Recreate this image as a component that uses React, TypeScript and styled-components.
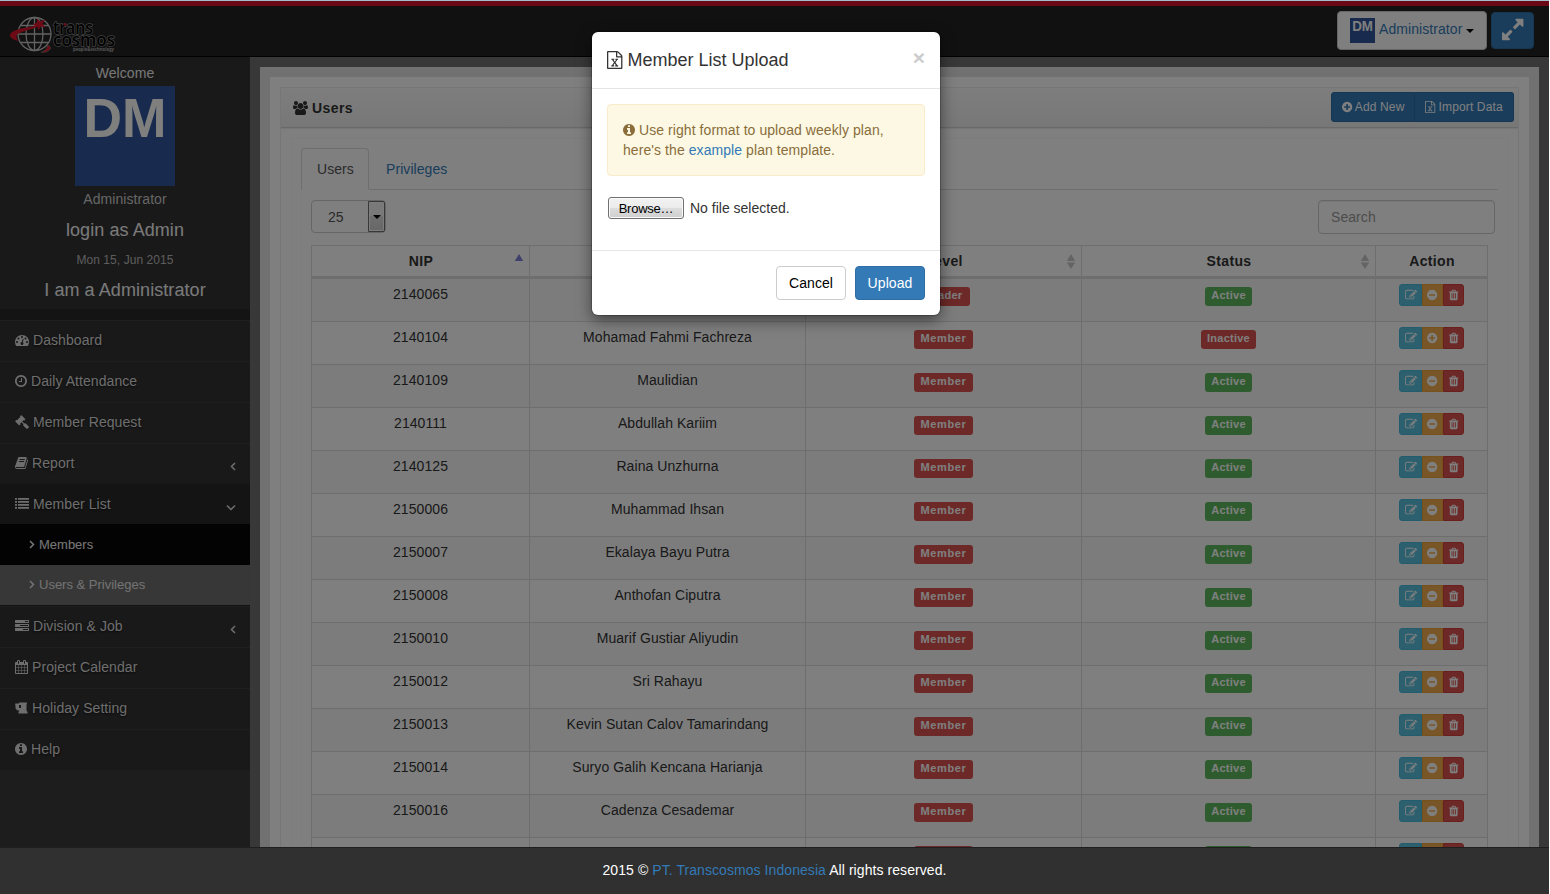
import React from "react";
import styled, { createGlobalStyle, css } from "styled-components";

const GlobalStyle = createGlobalStyle`
  *, *::before, *::after { box-sizing: border-box; }
  body {
    margin: 0;
    background: #fff;
    font-family: "Liberation Sans", Arial, sans-serif;
    font-size: 14px;
    line-height: 20px;
    letter-spacing: 0.07px;
    color: #333;
  }
  a { color: #337ab7; text-decoration: none; }
`;

/* ---------- icons ---------- */

const DISC =
  "M1664 896q0 209-103 385.5t-279.5 279.5-385.5 103-385.5-103-279.5-279.5-103-385.5 103-385.5 279.5-279.5 385.5-103 385.5 103 279.5 279.5 103 385.5z";

type Glyph = { x: number; w: number; d: string };

const glyphs = {
  info: {
    x: 128, w: 1536,
    d: "M1152 1376v-160q0-14-9-23t-23-9h-96v-512q0-14-9-23t-23-9h-320q-14 0-23 9t-9 23v160q0 14 9 23t23 9h96v320h-96q-14 0-23 9t-9 23v160q0 14 9 23t23 9h448q14 0 23-9t9-23zm-128-896v-160q0-14-9-23t-23-9h-192q-14 0-23 9t-9 23v160q0 14 9 23t23 9h192q14 0 23-9t9-23z" + DISC,
  },
  clock: {
    x: 128, w: 1536,
    d: "M1024 544v448q0 14-9 23t-23 9h-320q-14 0-23-9t-9-23v-64q0-14 9-23t23-9h224v-352q0-14 9-23t23-9h64q14 0 23 9t9 23zm416 352q0-148-73-273t-198-198-273-73-273 73-198 198-73 273 73 273 198 198 273 73 273-73 198-198 73-273z" + DISC,
  },
  plus: {
    x: 128, w: 1536,
    d: "M1344 960v-128q0-26-19-45t-45-19h-256v-256q0-26-19-45t-45-19h-128q-26 0-45 19t-19 45v256h-256q-26 0-45 19t-19 45v128q0 26 19 45t45 19h256v256q0 26 19 45t45 19h128q26 0 45-19t19-45v-256h256q26 0 45-19t19-45z" + DISC,
  },
  minus: {
    x: 128, w: 1536,
    d: "M1344 960v-128q0-26-19-45t-45-19h-768q-26 0-45 19t-19 45v128q0 26 19 45t45 19h768q26 0 45-19t19-45z" + DISC,
  },
  trash: {
    x: 192, w: 1408,
    d: "M704 1376v-704q0-14-9-23t-23-9h-64q-14 0-23 9t-9 23v704q0 14 9 23t23 9h64q14 0 23-9t9-23zm256 0v-704q0-14-9-23t-23-9h-64q-14 0-23 9t-9 23v704q0 14 9 23t23 9h64q14 0 23-9t9-23zm256 0v-704q0-14-9-23t-23-9h-64q-14 0-23 9t-9 23v704q0 14 9 23t23 9h64q14 0 23-9t9-23zm-544-992h448l-48-117q-7-9-17-11h-317q-10 2-17 11zm928 32v64q0 14-9 23t-23 9h-96v948q0 83-47 143.5t-113 60.5h-832q-66 0-113-58.5t-47-141.5v-952h-96q-14 0-23-9t-9-23v-64q0-14 9-23t23-9h309l70-167q15-37 54-63t79-26h320q40 0 79 26t54 63l70 167h309q14 0 23 9t9 23z",
  },
  edit: {
    x: 0, w: 1792,
    d: "M888 1184l116-116-152-152-116 116v56h96v96h56zm440-720q-16-16-33 1l-350 350q-17 17-1 33t33-1l350-350q17-17 1-33zm80 594v190q0 119-84.5 203.5t-203.5 84.5h-832q-119 0-203.5-84.5t-84.5-203.5v-832q0-119 84.5-203.5t203.5-84.5h832q63 0 117 25 15 7 18 23 3 17-9 29l-49 49q-14 14-32 8-23-6-45-6h-832q-66 0-113 47t-47 113v832q0 66 47 113t113 47h832q66 0 113-47t47-113v-126q0-13 9-22l64-64q15-15 35-7t20 29zm-96-738l288 288-672 672h-288v-288zm444 132l-92 92-288-288 92-92q28-28 68-28t68 28l152 152q28 28 28 68t-28 68z",
  },
  book: {
    x: 64, w: 1664,
    d: "M1703 478q40 57 18 129l-275 906q-19 64-76.5 107.5t-122.5 43.5h-923q-77 0-148.5-53.5t-99.5-131.5q-24-67-2-127 0-4 3-27t4-37q1-8-3-21.5t-3-19.5q2-11 8-21t16.5-23.5 16.5-23.5q23-38 45-91.5t30-91.5q3-10 .5-30t-.5-28q3-11 17-28t17-23q21-36 42-92t25-90q1-9-2.5-32t.5-28q4-13 22-30.5t22-22.5q19-26 42.5-84.5t27.5-96.5q1-8-3-25.5t-2-26.5q2-8 9-18t18-23 17-21q8-12 16.5-30.5t15-35 16-36 19.5-32 26.5-23.5 36-11.5 47.5 5.5l-1 3q38-9 51-9h761q74 0 114 56t18 130l-274 906q-36 119-71.5 153.5t-128.5 34.5h-869q-27 0-38 15-11 16-1 43 24 70 144 70h923q29 0 56-15.5t35-41.5l300-987q7-22 5-57 38 15 59 43zm-1064 2q-4 13 2 22.5t20 9.5h608q13 0 25.5-9.5t16.5-22.5l21-64q4-13-2-22.5t-20-9.5h-608q-13 0-25.5 9.5t-16.5 22.5zm-83 256q-4 13 2 22.5t20 9.5h608q13 0 25.5-9.5t16.5-22.5l21-64q4-13-2-22.5t-20-9.5h-608q-13 0-25.5 9.5t-16.5 22.5z",
  },
  list: {
    x: 0, w: 1792,
    d: "M0 1280h256v224H0zM0 896h256v224H0zM0 512h256v224H0zM384 1280h1408v224H384zM0 128h256v224H0zM384 896h1408v224H384zM384 512h1408v224H384zM384 128h1408v224H384z",
  },
  tasks: {
    x: 0, w: 1792,
    d: "M1024 1408h640v-128h-640v128zm-384-512h1024v-128h-1024v128zm640-512h384v-128h-384v128zm512 832v256q0 26-19 45t-45 19h-1664q-26 0-45-19t-19-45v-256q0-26 19-45t45-19h1664q26 0 45 19t19 45zm0-512v256q0 26-19 45t-45 19h-1664q-26 0-45-19t-19-45v-256q0-26 19-45t45-19h1664q26 0 45 19t19 45zm0-512v256q0 26-19 45t-45 19h-1664q-26 0-45-19t-19-45v-256q0-26 19-45t45-19h1664q26 0 45 19t19 45z",
  },
  excel: {
    x: 128, w: 1536,
    d: "M1596 380q28 28 48 76t20 88v1152q0 40-28 68t-68 28h-1344q-40 0-68-28t-28-68v-1600q0-40 28-68t68-28h896q40 0 88 20t76 48zm-444-244v376h376q-10-29-22-41l-313-313q-12-12-41-22zm384 1528v-1024h-416q-40 0-68-28t-28-68v-416h-768v1536h1280zm-979-234v106h281v-106h-75l103-161q5-7 10-16.5t7.5-13.5 3.5-4h2q1 4 5 10 2 4 4.5 7.5t6 8 6.5 8.5l107 161h-76v106h291v-106h-68l-192-273 195-282h67v-107h-279v107h74l-103 159q-4 7-10 16.5t-9 13.5l-2 3h-2q-1-4-5-10-6-11-17-23l-106-159h76v-107h-290v107h68l189 272-194 283h-68z",
  },
  users: {
    x: -64, w: 1920,
    d: "M529 896q-162 5-265 128h-134q-82 0-138-40.5t-56-118.5q0-353 124-353 6 0 43.5 21t97.5 42.5 119 21.5q67 0 133-23-5 37-5 66 0 139 81 256zm1071 637q0 120-73 189.5t-194 69.5h-874q-121 0-194-69.5t-73-189.5q0-53 3.5-103.5t14-109 26.5-108.5 43-97.5 62-81 85.5-53.5 111.5-20q10 0 43 21.5t73 48 107 48 135 21.5 135-21.5 107-48 73-48 43-21.5q61 0 111.5 20t85.5 53.5 62 81 43 97.5 26.5 108.5 14 109 3.5 103.5zm-1024-1277q0 106-75 181t-181 75-181-75-75-181 75-181 181-75 181 75 75 181zm704 384q0 159-112.5 271.5t-271.5 112.5-271.5-112.5-112.5-271.5 112.5-271.5 271.5-112.5 271.5 112.5 112.5 271.5zm576 225q0 78-56 118.5t-138 40.5h-134q-103-123-265-128 81-117 81-256 0-29-5-66 66 23 133 23 59 0 119-21.5t97.5-42.5 43.5-21q124 0 124 353zm-128-609q0 106-75 181t-181 75-181-75-75-181 75-181 181-75 181 75 75 181z",
  },
  gavel: {
    x: 0, w: 1792,
    d: "M1771 1536q0 53-37 90l-107 108q-39 37-91 37-53 0-90-37l-363-364q-38-36-38-90 0-53 43-96l-256-256-126 126q-14 14-34 14t-34-14q2 2 12.5 12t12.5 13 10 11.5 10 13.5 6 13.5 5.5 16.5 1.5 18q0 38-28 68-3 3-16.5 18t-19 20.5-18.5 16.5-22 15.5-22 9-26 4.5q-40 0-68-28l-408-408q-28-28-28-68 0-13 4.5-26t9-22 15.5-22 16.5-18.5 20.5-19 18-16.5q30-28 68-28 10 0 18 1.5t16.5 5.5 13.5 6 13.5 10 11.5 10 13 12.5 12 12.5q-14-14-14-34t14-34l348-348q14-14 34-14t34 14q-2-2-12.5-12t-12.5-13-10-11.5-10-13.5-6-13.5-5.5-16.5-1.5-18q0-38 28-68 3-3 16.5-18t19-20.5 18.5-16.5 22-15.5 22-9 26-4.5q40 0 68 28l408 408q28 28 28 68 0 13-4.5 26t-9 22-15.5 22-16.5 18.5-20.5 19-18 16.5q-30 28-68 28-10 0-18-1.5t-16.5-5.5-13.5-6-13.5-10-11.5-10-13-12.5-12-12.5q14 14 14 34t-14 34l-126 126 256 256q43-43 96-43 52 0 91 37l363 363q37 39 37 91z",
  },
  gauge: {
    x: 0, w: 1792,
    d: "M384 1152q0-53-37.5-90.5t-90.5-37.5-90.5 37.5-37.5 90.5 37.5 90.5 90.5 37.5 90.5-37.5 37.5-90.5zm192-448q0-53-37.5-90.5t-90.5-37.5-90.5 37.5-37.5 90.5 37.5 90.5 90.5 37.5 90.5-37.5 37.5-90.5zm428 481l101-382q6-26-7.5-48.5t-38.5-29.5-48 6.5-30 39.5l-101 382q-60 5-107 43.5t-63 98.5q-20 77 20 146t117 89 146-20 89-117q16-60-6-117t-72-91zm660-33q0-53-37.5-90.5t-90.5-37.5-90.5 37.5-37.5 90.5 37.5 90.5 90.5 37.5 90.5-37.5 37.5-90.5zm-640-640q0-53-37.5-90.5t-90.5-37.5-90.5 37.5-37.5 90.5 37.5 90.5 90.5 37.5 90.5-37.5 37.5-90.5zm448 192q0-53-37.5-90.5t-90.5-37.5-90.5 37.5-37.5 90.5 37.5 90.5 90.5 37.5 90.5-37.5 37.5-90.5zm320 448q0 261-141 483-19 29-54 29h-1402q-35 0-54-29-141-221-141-483 0-182 71-348t191-286 286-191 348-71 348 71 286 191 191 286 71 348z",
  },
  calendar: {
    x: 64, w: 1664,
    d: "M192 1664h288v-288h-288v288zm352 0h320v-288h-320v288zm-352-352h288v-320h-288v320zm352 0h320v-320h-320v320zm-352-384h288v-288h-288v288zm736 736h320v-288h-320v288zm-384-736h320v-288h-320v288zm768 736h288v-288h-288v288zm-384-352h320v-320h-320v320zm-352-864v-288q0-13-9.5-22.5t-22.5-9.5h-64q-13 0-22.5 9.5t-9.5 22.5v288q0 13 9.5 22.5t22.5 9.5h64q13 0 22.5-9.5t9.5-22.5zm736 864h288v-320h-288v320zm-384-384h320v-288h-320v288zm384 0h288v-288h-288v288zm32-480v-288q0-13-9.5-22.5t-22.5-9.5h-64q-13 0-22.5 9.5t-9.5 22.5v288q0 13 9.5 22.5t22.5 9.5h64q13 0 22.5-9.5t9.5-22.5zm384-64v1280q0 52-38 90t-90 38h-1408q-52 0-90-38t-38-90v-1280q0-52 38-90t90-38h128v-96q0-66 47-113t113-47h64q66 0 113 47t47 113v96h384v-96q0-66 47-113t113-47h64q66 0 113 47t47 113v96h128q52 0 90 38t38 90z",
  },
  beer: {
    x: 64, w: 1664,
    d: "M832 896v-384h-256v256q0 53 37.5 90.5t90.5 37.5h128zm832 512v192h-1152v-192l128-192h-128q-159 0-271.5-112.5t-112.5-271.5v-320l-64-64 32-128h480l32-128h960l32 192-64 32v800z",
  },
  expand: {
    x: 128, w: 1536,
    d: "M883 1056q0 13-10 23l-332 332 144 144q19 19 19 45t-19 45-45 19h-448q-26 0-45-19t-19-45v-448q0-26 19-45t45-19 45 19l144 144 332-332q10-10 23-10t23 10l114 114q10 10 10 23zm781-864v448q0 26-19 45t-45 19-45-19l-144-144-332 332q-10 10-23 10t-23-10l-114-114q-10-10-10-23t10-23l332-332-144-144q-19-19-19-45t19-45 45-19h448q26 0 45 19t19 45z",
  },
} satisfies Record<string, Glyph>;

type GlyphName = keyof typeof glyphs;

const GlyphSvg = styled.svg`
  display: inline-block;
  flex: none;
  fill: currentColor;
  vertical-align: -0.143em;
  overflow: visible;
`;

function Icon({ name, size = 14 }: { name: GlyphName; size?: number }) {
  const g = glyphs[name];
  return (
    <GlyphSvg viewBox={`${g.x} 0 ${g.w} 1792`} width={(g.w / 1792) * size} height={size} aria-hidden>
      <path fillRule="evenodd" d={g.d} />
    </GlyphSvg>
  );
}

const chevrons = {
  left: "M5 1 L1.5 4.5 L5 8",
  right: "M1 1 L4.5 4.5 L1 8",
  down: "M1 2.5 L5 6.5 L9 2.5",
};

const ChevronSvg = styled.svg`
  flex: none;
  fill: none;
  stroke: currentColor;
  stroke-width: 1.5;
`;

function Chevron({ dir }: { dir: keyof typeof chevrons }) {
  return (
    <ChevronSvg width={dir === "down" ? 10 : 6} height={9} aria-hidden>
      <path d={chevrons[dir]} />
    </ChevronSvg>
  );
}

function Avatar({ size }: { size: number }) {
  return (
    <svg width={size} height={size} viewBox="0 0 100 100" aria-label="DM">
      <rect width="100" height="100" fill="#32549f" />
      <text
        x="8.500"
        y="51"
        fill="#fffffa"
        fontFamily="'Liberation Sans', Arial, sans-serif"
        fontWeight="700"
        fontSize="56"
        letterSpacing="0"
        textLength="83"
        lengthAdjust="spacingAndGlyphs"
      >
        DM
      </text>
    </svg>
  );
}

function Logo() {
  return (
    <svg width="112" height="42" viewBox="0 0 112 42" aria-label="trans cosmos">
      <g fill="none" stroke="#c4c4c4" strokeWidth="1.300">
        <circle cx="25.500" cy="20" r="16.500" />
        <ellipse cx="25.500" cy="20" rx="8.500" ry="16.500" />
        <path d="M25.500 3.500v33M9 20h33M12 11.500h27M12 28.500h27" />
      </g>
      <path d="M10 27C4 26 .5 23.500 1 21c.6-4 9-6.500 17-7.500 5-1 9-2 11-3.500l1 1.500c-3 2.500-9 4-14 5.500-5 1.500-8.500 3-8.500 5.500 0 1.500 1 3 2.500 4.500z" fill="#d9142b" />
      <path d="M28 4.500l3 3 5-2-2.500 4 3 4-4.500-1-3 4-.5-4.500-5-1.500 4.500-2z" fill="#d9142b" />
      <path d="M38 31c4 1 5 3.500 1 6-2 1.200-4.500 1.500-7 1.200 4-1.200 7-3.500 6-7.200z" fill="#d9142b" stroke="#999" strokeWidth=".5" />
      <g
        fontFamily="'Open Sans', 'Noto Sans', sans-serif"
        fill="#000"
        stroke="#868686"
        strokeWidth="1.400"
        paintOrder="stroke"
        fontSize="18"
        fontWeight="600"
        letterSpacing="0"
      >
        <text x="44" y="19.500" textLength="40" lengthAdjust="spacingAndGlyphs">trans</text>
        <text x="44" y="32" textLength="62" lengthAdjust="spacingAndGlyphs">cosmos</text>
      </g>
      <text
        x="64"
        y="36.500"
        fontSize="5.500"
        fontWeight="700"
        letterSpacing="0"
        textLength="41"
        lengthAdjust="spacingAndGlyphs"
        fontFamily="'Open Sans', sans-serif"
        fill="#aaa"
      >
        people&amp;technology
      </text>
      <circle cx="56" cy="10.500" r="1.300" fill="#d9142b" />
    </svg>
  );
}

/* ---------- page frame ---------- */

const Screen = styled.div`
  position: relative;
  display: flex;
  flex-direction: column;
  width: 1549px;
  height: 894px;
  overflow: hidden;
`;

const WindowEdge = styled.div`
  position: relative;
  z-index: 3;
  flex: none;
  height: 1px;
  background: #a4bccb;
`;

const Navbar = styled.header`
  flex: none;
  display: flex;
  align-items: flex-start;
  justify-content: space-between;
  height: 56px;
  padding: 5px 15px 0 9px;
  border-top: 5px solid #d5132b;
  border-bottom: 1px solid #020202;
  background: #222;
`;

const Brand = styled.div`
  display: flex;
  padding-top: 3px;
`;

const NavTools = styled.div`
  display: flex;
  align-items: center;
  gap: 4px;
`;

const AccountButton = styled.a`
  display: flex;
  align-items: center;
  width: 150px;
  height: 39px;
  padding: 0 0 0 12px;
  border: 1px solid #ccc;
  border-radius: 4px;
  background: #fff;
`;

const AccountName = styled.span`
  margin: -3px 4px 0 4px;
`;

const Caret = styled.span`
  width: 0;
  height: 0;
  border: 4px solid transparent;
  border-top-color: #000;
  border-bottom: 0;
`;

const ExpandButton = styled.a`
  display: flex;
  align-items: center;
  justify-content: center;
  width: 43px;
  height: 37px;
  padding-bottom: 2px;
  border: 1px solid #2e6da4;
  border-radius: 4px;
  background: #337ab7;
  color: #fff;
`;

const Body = styled.div`
  flex: 1;
  display: flex;
  min-height: 0;
  background: #707070;
`;

/* ---------- sidebar ---------- */

const Sidebar = styled.aside`
  flex: none;
  display: flex;
  flex-direction: column;
  width: 250px;
  background: #3b3b3b;
`;

const Profile = styled.div`
  display: flex;
  flex-direction: column;
  align-items: center;
  height: 252px;
  padding-top: 6px;
  background: #323232;
  color: #ccc;
`;

const Welcome = styled.div`
  margin-bottom: 3px;
  color: #eee;
`;

const ProfileName = styled.div`
  margin-top: 3px;
  color: #ccc;
`;

const ProfileHeading = styled.div`
  margin: 11px 0 9px;
  font-size: 18px;
  color: #f4f4f4;
`;

const ProfileDate = styled.div`
  margin: 1px 0 -1px;
  font-size: 12px;
  color: #bbb;
`;

const MenuGap = styled.div`
  height: 11px;
  background: #292929;
`;

const MenuItem = styled.a<{ $open?: boolean; $short?: boolean }>`
  display: flex;
  align-items: center;
  gap: 4px;
  height: ${(p) => (p.$short ? 40 : 41)}px;
  padding: 0 14px ${(p) => (p.$short ? 1 : 2)}px 15px;
  border-top: 1px solid ${(p) => (p.$open ? "#2b2b2b" : "#3f3f3f")};
  background: ${(p) => (p.$open ? "#292929" : "#323232")};
  color: #ddd;
  text-shadow: 0 1px 2px #111;
`;

const MenuLabel = styled.span`
  flex: 1;
`;

const MenuArrow = styled.span`
  display: flex;
  padding-top: 6px;
`;

const SubItem = styled.a<{ $active?: boolean }>`
  display: flex;
  align-items: center;
  gap: 4px;
  height: ${(p) => (p.$active ? 40 : 41)}px;
  padding-left: 29px;
  padding-bottom: ${(p) => (p.$active ? 1 : 0)}px;
  font-size: 13px;
  letter-spacing: 0;
  background: ${(p) => (p.$active ? "#6f6f6f" : "#060606")};
  color: ${(p) => (p.$active ? "#e4e4e4" : "#eee")};
`;

const MenuDivider = styled.div`
  height: 1px;
  background: #222;
`;

/* ---------- content ---------- */

const Content = styled.main`
  flex: 1;
  display: flex;
  min-width: 0;
  padding: 10px 10px 0;
`;

const Frame = styled.div`
  flex: 1;
  min-width: 0;
  padding: 10px 10px 0;
  background: #e3e3e3;
`;

const Page = styled.div`
  height: 100%;
  padding: 10px 10px 0;
  background: #fff;
`;

const Box = styled.section`
  height: 1000px;
  border: 1px solid #ededed;
`;

const BoxHeader = styled.div`
  display: flex;
  align-items: center;
  justify-content: space-between;
  height: 40px;
  padding: 0 4px 0 12px;
  border-bottom: 1px solid #d2d2d2;
  background: linear-gradient(#fbfbfb, #efefef);
  box-shadow: 0 1px 1px #eee;
`;

const BoxTitle = styled.div`
  display: flex;
  align-items: center;
  gap: 4px;
  font-weight: 700;
  letter-spacing: 0.4px;
`;

const ButtonGroup = styled.div`
  display: flex;
  margin-bottom: 2px;
`;

const GroupButton = styled.a<{ $wide?: boolean }>`
  display: flex;
  align-items: center;
  justify-content: center;
  gap: 3px;
  width: ${(p) => (p.$wide ? 99 : 84)}px;
  height: 30px;
  border: 1px solid #2e6da4;
  border-left-width: ${(p) => (p.$wide ? 0 : 1)}px;
  border-radius: ${(p) => (p.$wide ? "0 3px 3px 0" : "3px 0 0 3px")};
  background: #337ab7;
  color: #fff;
  font-size: 12px;
  letter-spacing: 0.14px;
`;

const Inner = styled.div`
  margin: 10px 10px 0;
  height: 900px;
  border: 1px solid #f8f8f8;
  padding: 9px 9px 0;
`;

const Tabs = styled.nav`
  display: flex;
  height: 42px;
  border-bottom: 1px solid #ddd;
`;

const Tab = styled.a<{ $active?: boolean }>`
  height: 42px;
  padding: 10px 15px 0;
  border: 1px solid transparent;
  border-radius: 4px 4px 0 0;
  margin-right: 1px;
  ${(p) =>
    p.$active &&
    css`
      width: 68px;
      border-color: #ddd;
      border-bottom-color: #fff;
      background: #fff;
      color: #555;
    `}
`;

const TabPane = styled.div`
  padding: 10px 3px 0 9px;
  border-left: 1px solid #fafafa;
`;

const Controls = styled.div`
  display: flex;
  justify-content: space-between;
  height: 45px;
`;

const PageSize = styled.div`
  display: flex;
  align-items: center;
  justify-content: space-between;
  width: 75px;
  height: 33px;
  padding-left: 16px;
  border: 1px solid #ccc;
  border-radius: 4px;
  background: #fff;
  color: #555;
`;

const PageSizeArrow = styled.span`
  display: flex;
  align-items: center;
  justify-content: center;
  width: 17px;
  height: 31px;
  border: 1px solid #707070;
  border-radius: 0 2px 2px 0;
  background: linear-gradient(#f2f2f2 50%, #ddd 50%, #cfcfcf);
  box-shadow: inset 0 0 0 1px #fafafa;
`;

const SearchBox = styled.div`
  width: 177px;
  height: 34px;
  padding: 6px 12px;
  border: 1px solid #ccc;
  border-radius: 4px;
  box-shadow: inset 0 1px 1px rgba(0, 0, 0, 0.075);
  color: #999;
`;

/* ---------- table ---------- */

const Table = styled.div`
  width: 1177px;
  border: 1px solid #ddd;
  border-right: 0;
  color: #333;
`;

const rowColumns = css`
  display: grid;
  grid-template-columns: 218px 276px 276px 294px 112px;
`;

const HeadRow = styled.div`
  ${rowColumns}
  height: 32px;
  border-bottom: 2px solid #ddd;
`;

const HeadCell = styled.div`
  position: relative;
  padding: 5px 0 0 1px;
  border-right: 1px solid #ddd;
  text-align: center;
  font-weight: 700;
  letter-spacing: 0.35px;
`;

const SortMark = styled.svg`
  position: absolute;
  top: 8px;
  right: 5px;
`;

const Row = styled.div`
  ${rowColumns}
  height: 43px;
  border-top: 1px solid #ddd;
  &:nth-child(even) {
    background: #f9f9f9;
  }
`;

const Cell = styled.div<{ $pad?: number }>`
  display: flex;
  align-items: flex-start;
  justify-content: center;
  padding-top: ${(p) => p.$pad ?? 5}px;
  border-right: 1px solid #ddd;
`;

const tagWidths = { Member: 59, Leader: 53, Active: 47, Inactive: 55 };

const Tag = styled.span<{ $kind: keyof typeof tagWidths }>`
  width: ${(p) => tagWidths[p.$kind]}px;
  height: 19px;
  border-radius: 3px;
  background: ${(p) => (p.$kind === "Active" ? "#5cb85c" : "#d9534f")};
  color: #fff;
  font-size: 11px;
  font-weight: 700;
  line-height: 16px;
  text-align: center;
  letter-spacing: ${(p) => (p.$kind === "Member" ? 0.6 : 0.25)}px;
`;

const actionColors = {
  edit: ["#5bc0de", "#46b8da"],
  toggle: ["#f0ad4e", "#eea236"],
  remove: ["#d9534f", "#d43f3a"],
};

const ActionButton = styled.a<{ $kind: keyof typeof actionColors }>`
  display: flex;
  align-items: center;
  justify-content: center;
  width: ${(p) => (p.$kind === "edit" ? 23 : 21)}px;
  height: 22px;
  border: 1px solid ${(p) => actionColors[p.$kind][1]};
  background: ${(p) => actionColors[p.$kind][0]};
  color: #fff;
  &:first-child { border-radius: 3px 0 0 3px; }
  &:last-child { border-radius: 0 3px 3px 0; }
`;

/* ---------- footer ---------- */

const Footer = styled.footer`
  position: relative;
  z-index: 3;
  flex: none;
  height: 47px;
  padding-top: 12px;
  border-top: 1px solid #1f1f1f;
  background: #303030;
  color: #fff;
  text-align: center;
`;

/* ---------- dialog ---------- */

const Backdrop = styled.div`
  position: absolute;
  inset: 0;
  z-index: 1;
  background: rgba(0, 0, 0, 0.5);
`;

const Dialog = styled.div`
  position: absolute;
  z-index: 2;
  top: 32px;
  left: 592px;
  width: 348px;
  height: 283px;
  border-radius: 6px;
  background: #fff;
  box-shadow: 0 0 0 1px rgba(0, 0, 0, 0.2), 0 5px 15px rgba(0, 0, 0, 0.5);
`;

const DialogHeader = styled.div`
  display: flex;
  justify-content: space-between;
  height: 57px;
  padding: 15px;
  border-bottom: 1px solid #e5e5e5;
`;

const DialogTitle = styled.div`
  display: flex;
  align-items: center;
  gap: 5px;
  height: 26px;
  font-size: 18px;
  letter-spacing: 0;
`;

const CloseButton = styled.span`
  font-size: 21px;
  font-weight: 700;
  line-height: 22px;
  color: #ccc;
`;

const DialogBody = styled.div`
  height: 161px;
  padding: 15px;
`;

const Notice = styled.div`
  height: 72px;
  padding: 15px;
  border: 1px solid #faebcc;
  border-radius: 4px;
  background: #fcf8e3;
  color: #8a6d3b;
`;

const FileField = styled.div`
  display: flex;
  align-items: center;
  gap: 6px;
  margin: 21px 0 0 1px;
  letter-spacing: 0;
`;

const BrowseButton = styled.span`
  width: 76px;
  height: 22px;
  border: 1px solid #707070;
  border-radius: 3px;
  background: linear-gradient(#f2f2f2, #ebebeb 50%, #ddd 50%, #cfcfcf);
  box-shadow: inset 0 0 0 1px #fafafa;
  color: #000;
  font-size: 13px;
  line-height: 21px;
  letter-spacing: -0.25px;
  text-align: center;
`;

const DialogFooter = styled.div`
  display: flex;
  justify-content: flex-end;
  gap: 9px;
  padding: 15px;
  border-top: 1px solid #e5e5e5;
`;

const DialogButton = styled.a<{ $primary?: boolean }>`
  width: 70px;
  height: 34px;
  padding-top: 6px;
  border: 1px solid ${(p) => (p.$primary ? "#2e6da4" : "#ccc")};
  border-radius: 4px;
  background: ${(p) => (p.$primary ? "#337ab7" : "#fff")};
  color: ${(p) => (p.$primary ? "#fff" : "#000")};
  text-align: center;
`;

/* ---------- data ---------- */

type Member = { nip: string; name: string; level: "Member" | "Leader"; status: "Active" | "Inactive" };

const member = (nip: string, name: string, extra: Partial<Member> = {}): Member => ({
  nip,
  name,
  level: "Member",
  status: "Active",
  ...extra,
});

const members: Member[] = [
  member("2140065", "", { level: "Leader" }),
  member("2140104", "Mohamad Fahmi Fachreza", { status: "Inactive" }),
  member("2140109", "Maulidian"),
  member("2140111", "Abdullah Kariim"),
  member("2140125", "Raina Unzhurna"),
  member("2150006", "Muhammad Ihsan"),
  member("2150007", "Ekalaya Bayu Putra"),
  member("2150008", "Anthofan Ciputra"),
  member("2150010", "Muarif Gustiar Aliyudin"),
  member("2150012", "Sri Rahayu"),
  member("2150013", "Kevin Sutan Calov Tamarindang"),
  member("2150014", "Suryo Galih Kencana Harianja"),
  member("2150016", "Cadenza Cesademar"),
  member("", ""),
];

function SortIcon({ sorted }: { sorted?: boolean }) {
  return (
    <SortMark width="10" height="15" aria-hidden>
      <path d="M5 0 L9.200 7 H.8z" fill={sorted ? "#8080d8" : "#c8c8c8"} />
      {!sorted && <path d="M5 15 L9.200 8.500 H.8z" fill="#c8c8c8" />}
    </SortMark>
  );
}

function SideMenuItem(props: {
  icon: GlyphName;
  label: string;
  arrow?: "left" | "down";
  open?: boolean;
  short?: boolean;
}) {
  return (
    <MenuItem $open={props.open} $short={props.short}>
      <Icon name={props.icon} />
      <MenuLabel>{props.label}</MenuLabel>
      {props.arrow && (
        <MenuArrow>
          <Chevron dir={props.arrow} />
        </MenuArrow>
      )}
    </MenuItem>
  );
}

export default function App() {
  return (
    <>
      <GlobalStyle />
      <Screen>
        <WindowEdge />
        <Navbar>
          <Brand>
            <Logo />
          </Brand>
          <NavTools>
            <AccountButton>
              <Avatar size={25} />
              <AccountName>Administrator</AccountName>
              <Caret />
            </AccountButton>
            <ExpandButton>
              <Icon name="expand" size={25} />
            </ExpandButton>
          </NavTools>
        </Navbar>

        <Body>
          <Sidebar>
            <Profile>
              <Welcome>Welcome</Welcome>
              <Avatar size={100} />
              <ProfileName>Administrator</ProfileName>
              <ProfileHeading>login as Admin</ProfileHeading>
              <ProfileDate>Mon 15, Jun 2015</ProfileDate>
              <ProfileHeading>I am a Administrator</ProfileHeading>
            </Profile>
            <MenuGap />
            <SideMenuItem icon="gauge" label="Dashboard" />
            <SideMenuItem icon="clock" label="Daily Attendance" />
            <SideMenuItem icon="gavel" label="Member Request" />
            <SideMenuItem icon="book" label="Report" arrow="left" />
            <SideMenuItem icon="list" label="Member List" arrow="down" open short />
            <SubItem>
              <Chevron dir="right" />
              Members
            </SubItem>
            <SubItem $active>
              <Chevron dir="right" />
              Users &amp; Privileges
            </SubItem>
            <MenuDivider />
            <SideMenuItem icon="tasks" label="Division & Job" arrow="left" />
            <SideMenuItem icon="calendar" label="Project Calendar" />
            <SideMenuItem icon="beer" label="Holiday Setting" />
            <SideMenuItem icon="info" label="Help" />
          </Sidebar>

          <Content>
            <Frame>
              <Page>
                <Box>
                  <BoxHeader>
                    <BoxTitle>
                      <Icon name="users" />
                      Users
                    </BoxTitle>
                    <ButtonGroup>
                      <GroupButton>
                        <Icon name="plus" size={12} />
                        Add New
                      </GroupButton>
                      <GroupButton $wide>
                        <Icon name="excel" size={12} />
                        Import Data
                      </GroupButton>
                    </ButtonGroup>
                  </BoxHeader>
                  <Inner>
                    <Tabs>
                      <Tab $active>Users</Tab>
                      <Tab>Privileges</Tab>
                    </Tabs>
                    <TabPane>
                      <Controls>
                        <PageSize>
                          25
                          <PageSizeArrow>
                            <Caret />
                          </PageSizeArrow>
                        </PageSize>
                        <SearchBox>Search</SearchBox>
                      </Controls>
                      <Table>
                        <HeadRow>
                          <HeadCell>
                            NIP
                            <SortIcon sorted />
                          </HeadCell>
                          <HeadCell />
                          <HeadCell>
                            Level
                            <SortIcon />
                          </HeadCell>
                          <HeadCell>
                            Status
                            <SortIcon />
                          </HeadCell>
                          <HeadCell>Action</HeadCell>
                        </HeadRow>
                        {members.map((m, i) => (
                          <Row key={i}>
                            <Cell>{m.nip}</Cell>
                            <Cell>{m.name}</Cell>
                            <Cell $pad={8}>
                              <Tag $kind={m.level}>{m.level}</Tag>
                            </Cell>
                            <Cell $pad={8}>
                              <Tag $kind={m.status}>{m.status}</Tag>
                            </Cell>
                            <Cell $pad={5}>
                              <ActionButton $kind="edit">
                                <Icon name="edit" size={12} />
                              </ActionButton>
                              <ActionButton $kind="toggle">
                                <Icon name={m.status === "Active" ? "minus" : "plus"} size={12} />
                              </ActionButton>
                              <ActionButton $kind="remove">
                                <Icon name="trash" size={12} />
                              </ActionButton>
                            </Cell>
                          </Row>
                        ))}
                      </Table>
                    </TabPane>
                  </Inner>
                </Box>
              </Page>
            </Frame>
          </Content>
        </Body>

        <Footer>
          2015 © <a>PT. Transcosmos Indonesia</a> All rights reserved.
        </Footer>

        <Backdrop />
        <Dialog role="dialog">
          <DialogHeader>
            <DialogTitle>
              <Icon name="excel" size={18} />
              Member List Upload
            </DialogTitle>
            <CloseButton>×</CloseButton>
          </DialogHeader>
          <DialogBody>
            <Notice>
              <Icon name="info" /> Use right format to upload weekly plan, here's the <a>example</a> plan template.
            </Notice>
            <FileField>
              <BrowseButton>Browse…</BrowseButton>
              No file selected.
            </FileField>
          </DialogBody>
          <DialogFooter>
            <DialogButton>Cancel</DialogButton>
            <DialogButton $primary>Upload</DialogButton>
          </DialogFooter>
        </Dialog>
      </Screen>
    </>
  );
}
